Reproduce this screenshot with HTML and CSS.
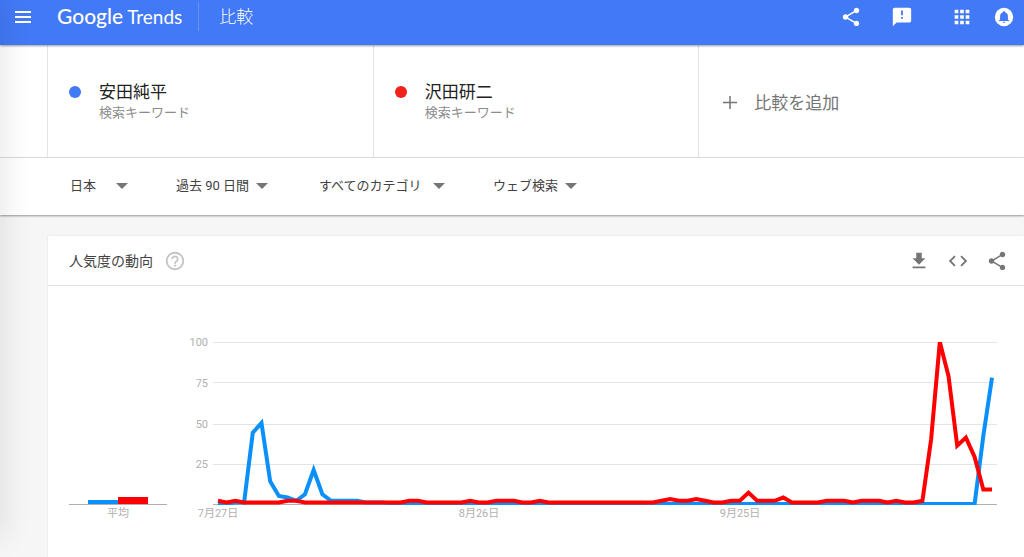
FILE: index.html
```html
<!DOCTYPE html>
<html lang="ja">
<head>
    <meta charset="UTF-8">
    <meta name="viewport" content="width=device-width, initial-scale=1.0">
    <title>Google Trends</title>
    <link rel="stylesheet" href="styles.css">
</head>
<body>
    <header class="topbar">
        <button class="icon-btn menu-btn" aria-label="メニュー">
            <svg width="24" height="24" viewBox="0 0 24 24"><path d="M4 7h16M4 12h16M4 17h16" stroke="currentColor" stroke-width="2"/></svg>
        </button>
        <a href="#" class="logo"><span class="logo-google">Google</span><span class="logo-trends">Trends</span></a>
        <h1 class="page-name">比較</h1>
        <div class="topbar-actions">
            <button class="icon-btn" aria-label="共有">
                <svg width="22" height="22" viewBox="0 0 24 24"><use href="#share"/></svg>
            </button>
            <button class="icon-btn feedback-btn" aria-label="フィードバック">
                <svg width="22" height="22" viewBox="0 0 24 24"><path d="M20 2H4c-1.100 0-2 .9-2 2v18l4-4h14c1.100 0 2-.9 2-2V4c0-1.100-.9-2-2-2zm-7 12h-2v-2h2v2zm0-4h-2V5h2v5z"/></svg>
            </button>
            <button class="icon-btn apps-btn" aria-label="アプリ">
                <svg width="22" height="22" viewBox="0 0 24 24"><path d="M4 8h4V4H4v4zm6 12h4v-4h-4v4zm-6 0h4v-4H4v4zm0-6h4v-4H4v4zm6 0h4v-4h-4v4zm6-10v4h4V4h-4zm-6 4h4V4h-4v4zm6 6h4v-4h-4v4zm0 6h4v-4h-4v4z"/></svg>
            </button>
            <button class="icon-btn" aria-label="通知">
                <svg width="20" height="20" viewBox="0 0 24 24"><circle cx="12" cy="12" r="11"/><path class="bell" d="M12 19c.9 0 1.500-.6 1.500-1.400h-3c0 .8.6 1.400 1.500 1.400zm4.700-4v-3.900c0-2.400-1.300-4.200-3.600-4.800v-.4a1.100 1.100 0 0 0-2.200 0v.4c-2.300.6-3.600 2.400-3.600 4.800V15L6 16.200v.7h12v-.7z"/></svg>
            </button>
        </div>
    </header>

    <main>
        <!-- Compared search terms -->
        <section class="terms">
            <div class="term">
                <span class="dot dot-blue"></span>
                <div>
                    <h2>安田純平</h2>
                    <p>検索キーワード</p>
                </div>
            </div>
            <div class="term">
                <span class="dot dot-red"></span>
                <div>
                    <h2>沢田研二</h2>
                    <p>検索キーワード</p>
                </div>
            </div>
            <button class="term add-term">
                <svg width="14" height="16" viewBox="0 0 14 16"><path d="M7 3v13M0 9.500h14" stroke="currentColor" stroke-width="1.500"/></svg>
                比較を追加
            </button>
        </section>

        <!-- Filters -->
        <form class="filters">
            <label class="filter filter-geo"><select aria-label="地域"><option>日本</option></select></label>
            <label class="filter filter-time"><select aria-label="期間"><option>過去 90 日間</option></select></label>
            <label class="filter filter-category"><select aria-label="カテゴリ"><option>すべてのカテゴリ</option></select></label>
            <label class="filter filter-type"><select aria-label="検索の種類"><option>ウェブ検索</option></select></label>
        </form>

        <!-- Interest over time -->
        <section class="card">
            <div class="card-header">
                <h3>人気度の動向</h3>
                <button class="icon-btn help-btn" aria-label="ヘルプ">
                    <svg width="22" height="22" viewBox="0 0 24 24"><path d="M11 18h2v-2h-2v2zm1-16C6.480 2 2 6.480 2 12s4.480 10 10 10 10-4.480 10-10S17.520 2 12 2zm0 18c-4.410 0-8-3.590-8-8s3.590-8 8-8 8 3.590 8 8-3.590 8-8 8zm0-14c-2.210 0-4 1.790-4 4h2c0-1.100.9-2 2-2s2 .9 2 2c0 2-3 1.750-3 5h2c0-2.250 3-2.500 3-5 0-2.210-1.790-4-4-4z"/></svg>
                </button>
                <div class="card-actions">
                    <button class="icon-btn" aria-label="ダウンロード">
                        <svg width="22" height="22" viewBox="0 0 24 24"><path d="M19 9h-4V3H9v6H5l7 7 7-7zM5 18v2h14v-2H5z"/></svg>
                    </button>
                    <button class="icon-btn" aria-label="埋め込み">
                        <svg width="22" height="22" viewBox="0 0 24 24"><path d="M9.400 16.600L4.800 12l4.600-4.600L8 6l-6 6 6 6 1.400-1.400zm5.200 0l4.600-4.600-4.600-4.600L16 6l6 6-6 6-1.400-1.400z"/></svg>
                    </button>
                    <button class="icon-btn" aria-label="共有">
                        <svg width="22" height="22" viewBox="0 0 24 24"><path id="share" d="M18 16.080c-.76 0-1.440.3-1.960.77L8.910 12.700c.05-.23.09-.46.09-.7s-.04-.47-.09-.7l7.050-4.110c.54.5 1.250.81 2.040.81 1.660 0 3-1.340 3-3s-1.340-3-3-3-3 1.340-3 3c0 .24.04.47.09.7L8.040 9.810C7.500 9.310 6.790 9 6 9c-1.660 0-3 1.340-3 3s1.340 3 3 3c.79 0 1.500-.31 2.040-.81l7.120 4.160c-.05.21-.08.43-.08.65 0 1.610 1.310 2.920 2.920 2.920s2.920-1.310 2.920-2.920-1.310-2.920-2.920-2.920z"/></svg>
                    </button>
                </div>
            </div>
            <svg class="chart" viewBox="0 0 976 290">
                <!-- Averages -->
                <path class="axis" d="M21 218.500h98"/>
                <rect class="bar-blue" x="40" y="214" width="30" height="4"/>
                <rect class="bar-red" x="70" y="211" width="30" height="7"/>
                <text x="70" y="231" text-anchor="middle">平均</text>

                <path class="grid" d="M165 56.500h784M165 96.500h784M165 138.500h784M165 178.500h784"/>
                <path class="axis" d="M165 218.500h784"/>
                <g text-anchor="end">
                    <text x="160" y="60">100</text>
                    <text x="160" y="101">75</text>
                    <text x="160" y="142">50</text>
                    <text x="160" y="182">25</text>
                </g>
                <g text-anchor="middle">
                    <text x="170" y="231">7月27日</text>
                    <text x="431" y="231">8月26日</text>
                    <text x="692" y="231">9月25日</text>
                </g>
                <g clip-path="url(#plotArea)">
                    <polyline class="line line-blue" id="lineBlue"/>
                    <polyline class="line line-red" id="lineRed"/>
                </g>
                <clipPath id="plotArea"><rect x="165" y="56" width="784" height="163"/></clipPath>
            </svg>
        </section>
    </main>

    <script>
        // Daily values, 0 - 100
        const blue = [
            0, 0, 1, 1, 44, 50, 14, 5, 4, 2, 6, 21, 6, 2, 2, 2, 2, 1, 1, 1,
            ...Array(68).fill(0), 42, 78
        ];
        const red = [
            2, 1, 2, 1, 1, 1, 1, 1, 2, 2, 1, 1, 1, 1, 1, 1, 1, 1, 1, 1,
            1, 1, 2, 2, 1, 1, 1, 1, 1, 2, 1, 1, 2, 2, 2, 1, 1, 2, 1, 1,
            1, 1, 1, 1, 1, 1, 1, 1, 1, 1, 1, 2, 3, 2, 2, 3, 2, 1, 1, 2,
            2, 7, 2, 2, 2, 4, 1, 1, 1, 1, 2, 2, 2, 1, 2, 2, 2, 1, 2, 1,
            1, 2, 40, 100, 79, 36, 41, 29, 9, 9
        ];

        function drawLine(id, values) {
            const left = 170, right = 944, bottom = 218, height = 162;
            const step = (right - left) / (values.length - 1);
            const points = values.map((value, i) => `${left + i * step},${bottom - value * height / 100}`);
            document.getElementById(id).setAttribute('points', points.join(' '));
        }

        drawLine('lineBlue', blue);
        drawLine('lineRed', red);
    </script>
</body>
</html>
```
FILE: styles.css
```css
* {
    box-sizing: border-box;
    margin: 0;
    padding: 0;
}

body {
    font-family: Roboto, 'Noto Sans CJK JP', sans-serif;
    background-color: #f6f6f6;
    color: #212121;
    overflow-x: hidden;
}

/* Soft shade down the left edge of the page */
body::before {
    content: "";
    position: fixed;
    top: 0;
    bottom: 20px;
    left: -20px;
    width: 20px;
    box-shadow: 0 0 32px rgba(0, 0, 0, 0.14);
    pointer-events: none;
    z-index: 10;
}

button,
select {
    font-family: inherit;
    color: inherit;
    background: none;
    border: none;
    cursor: pointer;
}

svg {
    display: block;
    fill: currentColor;
}

h1, h2, h3 {
    font-weight: normal;
}

.icon-btn {
    display: flex;
}

/* Top bar */
.topbar {
    position: relative;
    display: flex;
    align-items: center;
    height: 45px;
    padding: 0 10px 12px 11px;
    background-color: #4279f6;
    color: white;
    box-shadow: 0 1px 2px rgba(0, 0, 0, 0.4);
}

.menu-btn {
    margin-right: 22px;
}

.logo {
    display: flex;
    align-items: baseline;
    gap: 4px;
    padding-right: 16px;
    border-right: 1px solid #6893f8;
    font-family: Lato, sans-serif;
    line-height: 28px;
    color: white;
    text-decoration: none;
}

.logo-google {
    font-size: 21px;
    font-weight: 500;
}

.logo-trends {
    font-size: 19px;
}

.page-name {
    margin-left: 20px;
    font-size: 17px;
    font-weight: 300;
    line-height: 28px;
}

.topbar-actions {
    display: flex;
    align-items: center;
    margin-left: auto;
}

.feedback-btn {
    margin-left: 29px;
}

.apps-btn {
    margin: 0 21px 0 38px;
}

.bell {
    fill: #4279f6;
}

/* Search terms */
.terms {
    display: grid;
    grid-template-columns: 1fr 1fr 1fr;
    height: 113px;
    padding-left: 47px;
    background-color: white;
    border-bottom: 1px solid #e0e0e0;
}

.term {
    display: flex;
    align-items: center;
    gap: 18px;
    padding-left: 21px;
    border-left: 1px solid #e4e4e4;
}

.dot {
    width: 12px;
    height: 12px;
    margin-bottom: 18px;
    border-radius: 50%;
}

.dot-blue {
    background-color: #4279f6;
}

.dot-red {
    background-color: #f1211b;
}

.term h2 {
    font-size: 17px;
    line-height: 24px;
}

.term p {
    font-size: 13px;
    line-height: 18px;
    color: #8c8c8c;
}

.add-term {
    gap: 17px;
    padding-left: 24px;
    font-size: 17px;
    color: #757575;
}

/* Filters */
.filters {
    position: relative;
    display: flex;
    align-items: center;
    gap: 48px;
    height: 57px;
    padding: 0 0 2px 70px;
    background-color: white;
    box-shadow: 0 1px 2px rgba(0, 0, 0, 0.4);
}

.filter {
    display: flex;
    align-items: center;
    gap: 6px;
}

.filter::after {
    content: "";
    border: 6px solid transparent;
    border-top-color: #757575;
    border-bottom: none;
}

.filter select {
    appearance: none;
    font-size: 13px;
    line-height: 20px;
    color: #424242;
}

.filter-geo select {
    width: 40px;
}

.filter-time {
    width: 95px;
}

.filter-category select {
    width: 108px;
}

/* Chart card */
.card {
    margin: 21px 0 0 48px;
    background-color: white;
    box-shadow: 0 0 2px rgba(0, 0, 0, 0.1);
}

.card-header {
    display: flex;
    align-items: center;
    height: 50px;
    padding: 0 16px 0 21px;
    border-bottom: 1px solid #e0e0e0;
}

.card-header h3 {
    font-size: 14px;
    line-height: 20px;
    color: #424242;
}

.help-btn {
    margin-left: 11px;
    color: #c4c4c4;
}

.card-actions {
    display: flex;
    gap: 17px;
    margin-left: auto;
    color: #757575;
}

.chart {
    width: 100%;
}

.chart text {
    font-size: 11px;
    fill: #b0b0b0;
}

.grid {
    stroke: #e4e4e4;
}

.axis {
    stroke: #b0b0b0;
}

.bar-blue {
    fill: #0a90fa;
}

.bar-red {
    fill: #ff0000;
}

.line {
    fill: none;
    stroke-width: 4;
}

.line-blue {
    stroke: #0a90fa;
}

.line-red {
    stroke: #ff0000;
}
```
